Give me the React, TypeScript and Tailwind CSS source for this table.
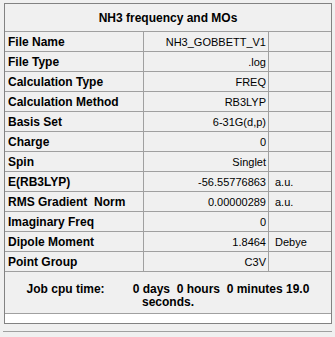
const rows: [string, string, string?][] = [
  ["File Name", "NH3_GOBBETT_V1"],
  ["File Type", ".log"],
  ["Calculation Type", "FREQ"],
  ["Calculation Method", "RB3LYP"],
  ["Basis Set", "6-31G(d,p)"],
  ["Charge", "0"],
  ["Spin", "Singlet"],
  ["E(RB3LYP)", "-56.55776863", "a.u."],
  ["RMS Gradient  Norm", "0.00000289", "a.u."],
  ["Imaginary Freq", "0"],
  ["Dipole Moment", "1.8464", "Debye"],
  ["Point Group", "C3V"],
];

const font = { fontFamily: '"Liberation Sans", Arial, sans-serif' };

function SummaryRow({ label, value, unit }: { label: string; value: string; unit?: string }) {
  return (
    <div className="grid h-[20px] grid-cols-[139px_125px_62px] border-b border-[#a0a0a0]">
      <div className="flex items-center border-r border-[#a0a0a0] pt-[1px] pl-[3px] text-[12px] font-bold whitespace-pre">
        {label}
      </div>
      <div className="flex items-center justify-end border-r border-[#a0a0a0] pt-[1px] pr-[2px] text-[11px]">
        {value}
      </div>
      <div className="flex items-center pt-[1px] pl-[6px] text-[11px]">{unit}</div>
    </div>
  );
}

export default function App() {
  return (
    <div className="h-[337px] w-[335px] bg-[#f0f0f0] pt-[3px] pl-[4px] text-black" style={font}>
      <div className="w-[328px] border border-[#828282]">
        <div className="flex h-[28px] items-center justify-center border-b border-[#a0a0a0] text-[12px] font-bold">
          NH3 frequency and MOs
        </div>
        {rows.map(([label, value, unit]) => (
          <SummaryRow key={label} label={label} value={value} unit={unit} />
        ))}
        <div className="h-[42px] border-b border-[#a0a0a0] pt-[11px] text-center text-[12px] leading-[13px] font-bold">
          <div className="whitespace-pre">
            <span>Job cpu time:</span>
            <span className="ml-[28px]">0 days  0 hours  0 minutes 19.0</span>
          </div>
          <div>seconds.</div>
        </div>
        <div className="h-[9px] bg-white" />
      </div>
      <div className="mt-[7px] ml-[-1px] h-px w-[329px] bg-[#a0a0a0]" />
    </div>
  );
}
